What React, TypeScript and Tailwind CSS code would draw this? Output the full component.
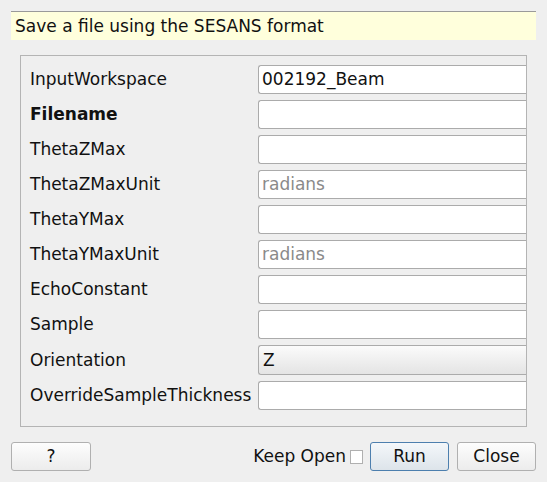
import React from "react";

const ROWS: { label: string; value?: string; hint?: boolean; bold?: boolean; combo?: boolean }[] = [
  { label: "InputWorkspace", value: "002192_Beam" },
  { label: "Filename", bold: true },
  { label: "ThetaZMax" },
  { label: "ThetaZMaxUnit", value: "radians", hint: true },
  { label: "ThetaYMax" },
  { label: "ThetaYMaxUnit", value: "radians", hint: true },
  { label: "EchoConstant" },
  { label: "Sample" },
  { label: "Orientation", value: "Z", combo: true },
  { label: "OverrideSampleThickness" },
];

function Field({ row }: { row: (typeof ROWS)[number] }) {
  if (row.combo) {
    return (
      <div className="flex-1 h-[30px] flex items-center pl-[4px] border border-r-0 border-[#ababab] rounded-l-[3px] bg-gradient-to-b from-[#fbfbfb] to-[#e4e4e4] text-[#111]">
        {row.value}
      </div>
    );
  }
  return (
    <div
      className={`flex-1 h-[29px] flex items-center pl-[3px] border border-r-0 border-[#ababab] rounded-l-[3px] bg-white ${
        row.hint ? "text-[#8a8a8a]" : "text-[#111]"
      }`}
    >
      {row.value}
    </div>
  );
}

export default function App() {
  return (
    <div
      className="w-[547px] h-[482px] bg-[#efefef] px-[11px] pt-[11px] text-[17px] leading-none text-[#111]"
      style={{ fontFamily: '"DejaVu Sans", sans-serif' }}
    >
      {/* Description */}
      <div className="h-[29px] bg-[#ffffdc] border-t border-[#9a9a9a] flex items-center pl-[4px]">
        Save a file using the SESANS format
      </div>

      {/* Property group */}
      <div className="mt-[15px] ml-[9px] w-[507px] h-[372px] border border-[#b4b4b4] pl-[9px] pt-[9px] flex flex-col gap-[6px]">
        {ROWS.map((r) => (
          <div key={r.label} className="flex items-center">
            <div className={`w-[228px] ${r.bold ? "font-bold" : ""}`}>{r.label}</div>
            <Field row={r} />
          </div>
        ))}
      </div>

      {/* Buttons */}
      <div className="mt-[15px] flex items-center">
        <button className="w-[80px] h-[29px] border border-[#b0b0b0] rounded-[3px] bg-gradient-to-b from-[#fdfdfd] to-[#ececec]">
          ?
        </button>
        <div className="ml-auto flex items-center">
          <span>Keep Open</span>
          <span className="ml-[4px] w-[13px] h-[14px] border border-[#b0b0b0] bg-white" />
          <button className="ml-[7px] w-[79px] h-[29px] border border-[#4d7fae] rounded-[3px] bg-gradient-to-b from-[#f4f7fa] to-[#dde4ea]">
            Run
          </button>
          <button className="ml-[8px] w-[79px] h-[29px] border border-[#b0b0b0] rounded-[3px] bg-gradient-to-b from-[#fdfdfd] to-[#ececec]">
            Close
          </button>
        </div>
      </div>
    </div>
  );
}
